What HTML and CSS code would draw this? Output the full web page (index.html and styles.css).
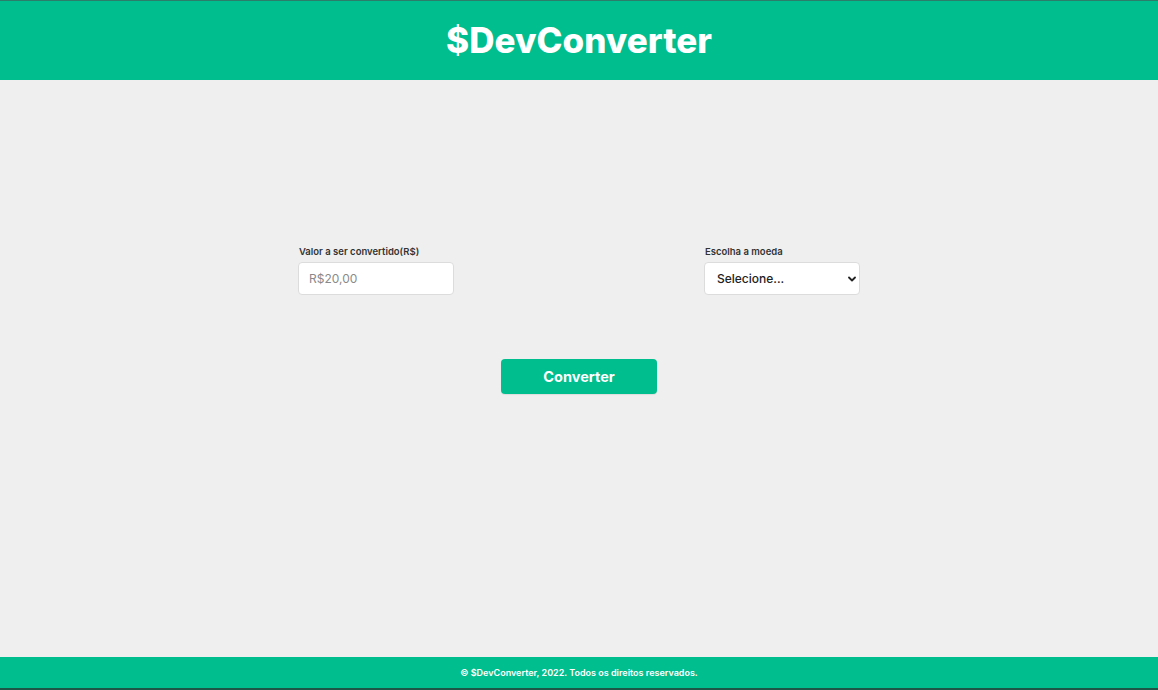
FILE: index.html
```html
<!DOCTYPE html>
<html lang="pt-BR">
<head>
<meta charset="utf-8">
<title>$DevConverter</title>
<link rel="stylesheet" href="styles.css">
</head>
<body>
<header class="topbar">
  <h1 class="brand">$DevConverter</h1>
</header>
<main class="main">
  <form class="converter">
    <div class="fields">
      <div class="field">
        <label class="label" for="valor">Valor a ser convertido(R$)</label>
        <input class="input" id="valor" type="text" placeholder="R$20,00">
      </div>
      <div class="field">
        <label class="label" for="moeda">Escolha a moeda</label>
        <div class="select-wrap">
          <select class="select" id="moeda">
            <option>Selecione...</option>
          </select>
          <svg class="chev" width="8" height="6" viewBox="0 0 8 6"><path d="M1 1.5 L4 4.5 L7 1.5" fill="none" stroke="#222" stroke-width="1.8" stroke-linecap="round" stroke-linejoin="round"/></svg>
        </div>
      </div>
    </div>
    <button class="btn" type="button">Converter</button>
  </form>
</main>
<footer class="footer">
  <p class="copy">© $DevConverter, 2022. Todos os direitos reservados.</p>
</footer>
</body>
</html>
```
FILE: styles.css
```css
* { box-sizing: border-box; }
html, body { margin: 0; padding: 0; }
body {
  min-height: 100vh;
  display: flex;
  flex-direction: column;
  background: #efefef;
  font-family: Inter, "Open Sans", "Liberation Sans", sans-serif;
  color: #333;
}
.topbar {
  height: 80px;
  background: #00be8e;
  border-top: 1px solid #2d7d6b;
  display: flex;
  align-items: center;
  justify-content: center;
  padding-bottom: 2px;
}
.brand {
  margin: 0;
  color: #fff;
  font-size: 35px;
  font-weight: 800;
  letter-spacing: 0;
}
.main {
  flex: 1;
  display: flex;
  justify-content: center;
  padding-top: 165px;
}
.converter {
  width: 562px;
  display: flex;
  flex-direction: column;
  align-items: center;
}
.fields {
  width: 100%;
  display: flex;
  justify-content: space-between;
}
.field {
  display: flex;
  flex-direction: column;
  gap: 4px;
}
.label {
  font-size: 9.5px;
  font-weight: 600;
  color: #333;
  line-height: 13px;
  padding-left: 1px;
}
.input {
  width: 156px;
  height: 33px;
  border: 1px solid #dcdcdc;
  border-radius: 4px;
  background: #fff;
  padding: 0 10px;
  font-family: inherit;
  font-size: 12px;
  color: #333;
  outline: none;
}
.input::placeholder { color: #8a8a8a; }
.select-wrap { position: relative; width: 156px; }
.select {
  appearance: none;
  -webkit-appearance: none;
  width: 156px;
  height: 33px;
  border: 1px solid #dcdcdc;
  border-radius: 4px;
  background: #fff;
  padding: 0 12px;
  font-family: inherit;
  font-size: 12px;
  font-weight: 500;
  color: #222;
}
.chev {
  position: absolute;
  right: 4px;
  top: 14px;
  pointer-events: none;
}
.btn {
  margin-top: 64px;
  width: 156px;
  height: 35px;
  border: none;
  border-radius: 4px;
  background: #00be8e;
  color: #fff;
  font-family: inherit;
  font-size: 14.5px;
  font-weight: 700;
  box-shadow: 0 1px 1px rgba(0,0,0,0.08);
}
.footer {
  height: 33px;
  background: #00be8e;
  border-bottom: 2px solid #1d5546;
  display: flex;
  align-items: center;
  justify-content: center;
}
.copy {
  margin: 0;
  color: #fff;
  font-size: 9px;
  font-weight: 600;
}
```
